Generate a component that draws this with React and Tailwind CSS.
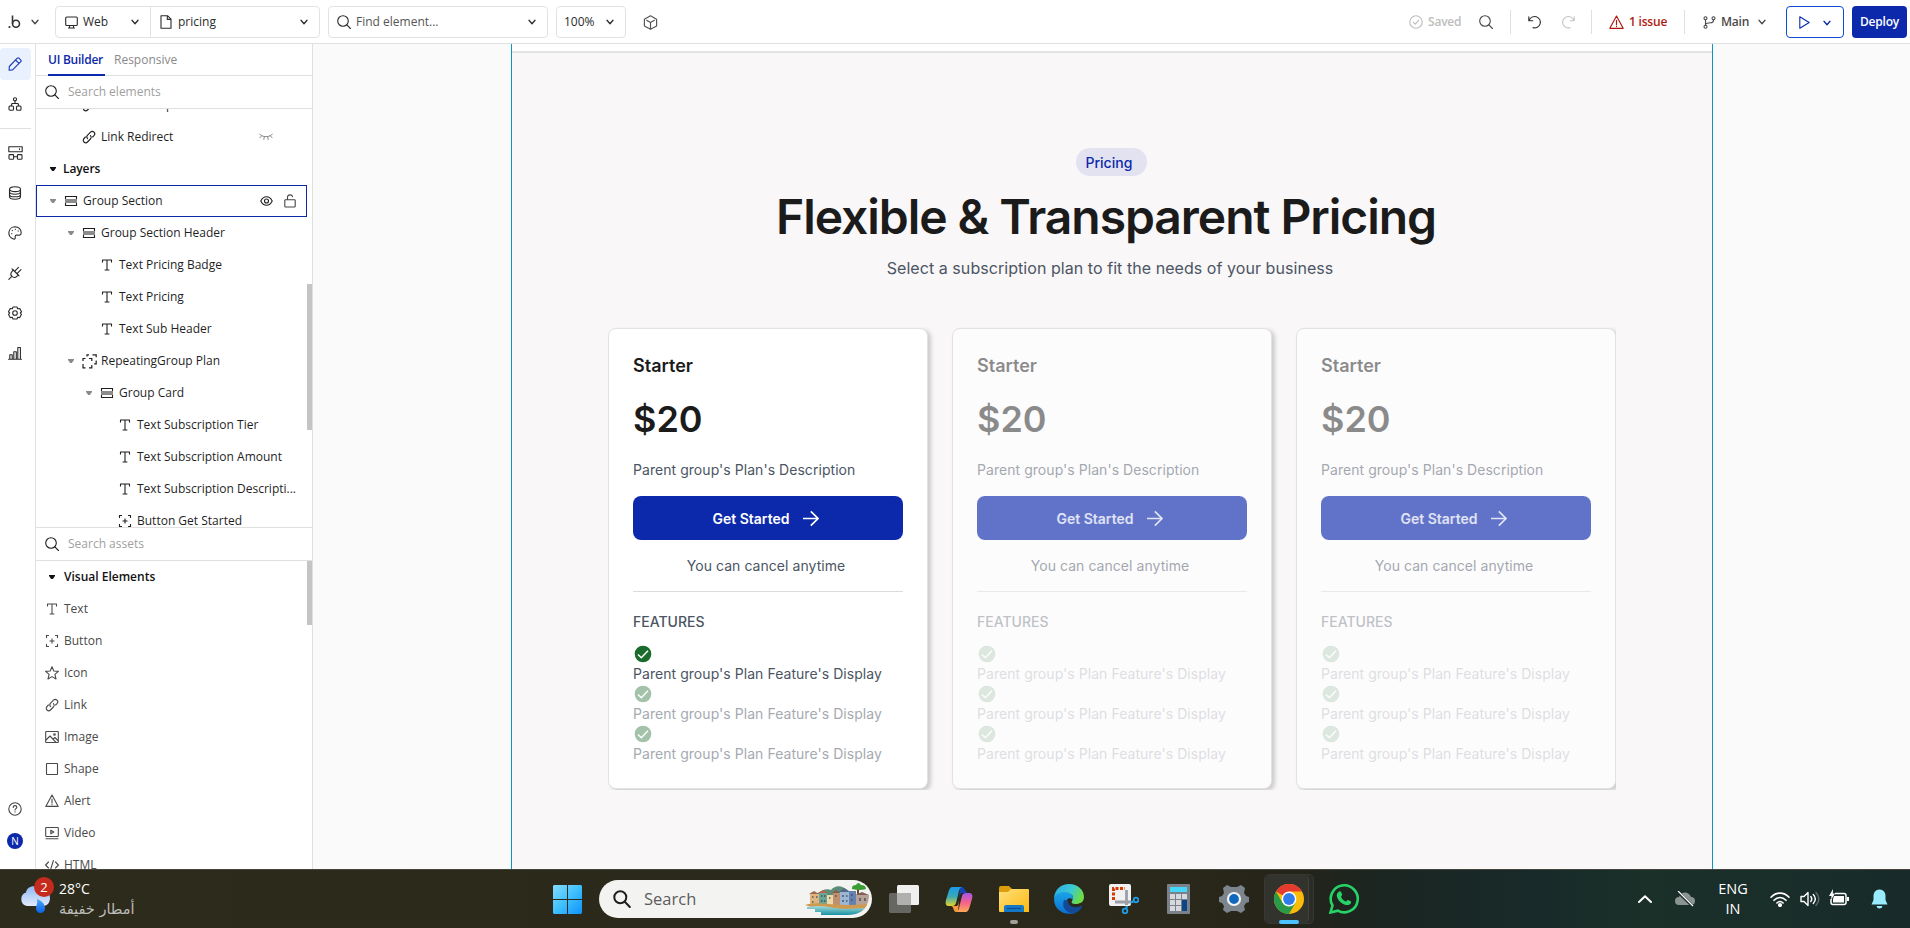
import React from "react";

function Svg({ vb = "0 0 16 16", className = "w-4 h-4", sw = 1.1, children }) {
  return (
    <svg viewBox={vb} className={"shrink-0 " + className} fill="none" stroke="currentColor" strokeWidth={sw} strokeLinecap="round" strokeLinejoin="round">
      {children}
    </svg>
  );
}

const Chevron = ({ className = "w-[8px] h-[8px]" }) => (
  <Svg vb="0 0 8 8" sw={1.3} className={className}><path d="M1 2.3 4 5.7 7 2.3" /></Svg>
);
const Magnifier = ({ className = "w-[14px] h-[14px]" }) => (
  <Svg vb="0 0 14 14" className={className}><circle cx="6" cy="6" r="5.3" /><path d="m9.9 9.9 3.5 3.6" /></Svg>
);
const Caret = ({ className }) => (
  <svg viewBox="0 0 6 4" className={"w-[6px] h-[4px] shrink-0 " + className} fill="currentColor"><path d="M0 0h6v1L3.800 4H2.200L0 1z" /></svg>
);
const LinkIcon = () => (
  <Svg vb="0 0 14 14" className="w-[14px] h-[14px]">
    <path d="M5.600 8.600c-1-1-1-2.500 0-3.500l2.900-3c1-1 2.500-1 3.500 0s1 2.500 0 3.500L10.600 7" />
    <path d="M8.400 5.600c1 1 1 2.400 0 3.400l-2.900 3c-1 1-2.500 1-3.500 0s-1-2.500 0-3.500L3.400 7" />
  </Svg>
);
const TextIcon = () => (
  <Svg vb="0 0 14 14" className="w-[14px] h-[14px]"><path d="M2.500 4V2h9v2M7 2v10M5.200 12h3.600" strokeLinecap="square" /></Svg>
);
const GroupIcon = () => (
  <svg viewBox="0 0 14 14" className="w-[14px] h-[14px] shrink-0" fill="none" stroke="currentColor" strokeWidth="1.100">
    <path d="M1.500 5V2.500h11V5M1.500 9v2.500h11V9" /><rect x="1" y="5" width="12" height="4" fill="#8b8b8b" stroke="none" />
  </svg>
);
const RepeatIcon = () => (
  <svg viewBox="0 0 15 15" className="w-[15px] h-[15px] shrink-0" fill="none" stroke="currentColor" strokeWidth="1.200">
    <path d="M1 7V4.500h2.500M7 4.500h2.800V7M1 10v3.800h2.500M7 13.800h2.800V11" /><path d="M5 2.500V.8h2M10.500.8h3.700v2.400M14.200 6.500v3.300h-2" />
  </svg>
);
const ButtonIcon = () => (
  <svg viewBox="0 0 14 14" className="w-[14px] h-[14px] shrink-0" fill="none" stroke="currentColor" strokeWidth="1.100">
    <path d="M1.500 4V1.500H4M10 1.500h2.500V4M12.500 10v2.500H10M4 12.500H1.500V10M7 4.500v5M4.500 7h5" />
  </svg>
);
const StarIcon = () => (
  <Svg vb="0 0 14 14" className="w-[14px] h-[14px]"><path d="m7 .7 1.800 4.300 4.600.4-3.500 3 1.100 4.600L7 10.600 3 13l1.100-4.600-3.500-3 4.600-.4z" /></Svg>
);
const ImageIcon = () => (
  <Svg vb="0 0 14 14" className="w-[14px] h-[14px]"><rect x=".7" y="1.500" width="12.600" height="11" rx=".5" /><path d="m1 10 4-4 6 6.300M8.300 9l1.600-1.500 3 3" /><circle cx="9.500" cy="4.500" r=".8" /></Svg>
);
const ShapeIcon = () => (
  <Svg vb="0 0 14 14" className="w-[14px] h-[14px]"><rect x="1.500" y="1.500" width="11" height="11" rx=".4" /></Svg>
);
const AlertIcon = ({ className = "w-[14px] h-[14px]" }) => (
  <Svg vb="0 0 14 14" className={className}><path d="M7 1 .8 12.400h12.400zM7 5v4M7 10.500v.3" /></Svg>
);
const VideoIcon = () => (
  <Svg vb="0 0 14 14" className="w-[14px] h-[14px]"><rect x=".7" y="1.500" width="12.600" height="9" rx=".4" /><path d="M5.800 4.300v3.400L8.800 6zM1 12.700h12" /></Svg>
);
const HtmlIcon = () => (
  <Svg vb="0 0 14 14" className="w-[14px] h-[14px]"><path d="M3.500 4 .6 7l2.900 3M10.500 4l2.900 3-2.900 3M8.400 2.500l-2.800 9" /></Svg>
);
const ClosedEye = () => (
  <Svg vb="0 0 14 8" className="w-[14px] h-[8px] text-[#8a8a8a]" sw={1}><path d="M.6 1C2.500 4.600 11.500 4.600 13.400 1M2.500 3 .9 4.800M5.300 4 4.800 6.500M8.700 4l.5 2.500M11.500 3l1.600 1.800" /></Svg>
);

/* ---------- Top bar ---------- */
function TopBar() {
  return (
    <header className="h-[44px] shrink-0 border-b border-[#e0e0e0] bg-white flex items-center text-[12px] text-[#2b2b2b] pt-[1px]">
      <div className="w-[55px] flex items-center pl-[8px] text-[#444]">
        <svg viewBox="0 0 13 14" className="w-[13px] h-[14px]" fill="none" stroke="#333" strokeWidth="1.600">
          <circle cx="8" cy="8.700" r="3.500" /><path d="M4.500.5v8.200" /><circle cx="1.500" cy="12" r="1.100" fill="#333" stroke="none" />
        </svg>
        <Chevron className="w-[8px] h-[8px] ml-[10px]" />
      </div>
      <div className="w-[265px] h-[32px] border border-[#e2e2e2] rounded-[4px] flex">
        <div className="w-[95px] border-r border-[#e2e2e2] flex items-center pl-[9px]">
          <Svg vb="0 0 13 13" className="w-[13px] h-[13px]"><rect x=".7" y="1" width="11.600" height="8.500" rx="1" /><path d="M3.500 12h6M4.500 9.800V12M8.500 9.800V12" /></Svg>
          <span className="ml-[5px] flex-1">Web</span>
          <Chevron className="w-[8px] h-[8px] mr-[11px]" />
        </div>
        <div className="flex-1 flex items-center pl-[9px]">
          <Svg vb="0 0 12 14" className="w-[12px] h-[14px]"><path d="M1 .7h6.500L11 4.200v9.100H1zM7.300.8v3.600H11" /></Svg>
          <span className="ml-[6px] flex-1">pricing</span>
          <Chevron className="w-[8px] h-[8px] mr-[11px]" />
        </div>
      </div>
      <div className="ml-[8px] w-[220px] h-[32px] border border-[#e2e2e2] rounded-[4px] flex items-center pl-[8px]">
        <Magnifier />
        <span className="ml-[5px] flex-1 text-[#555]">Find element...</span>
        <Chevron className="w-[8px] h-[8px] mr-[11px]" />
      </div>
      <div className="ml-[8px] w-[70px] h-[32px] border border-[#e2e2e2] rounded-[4px] flex items-center pl-[7px]">
        <span className="flex-1">100%</span>
        <Chevron className="w-[8px] h-[8px] mr-[11px]" />
      </div>
      <Svg vb="0 0 14 14" className="w-[15px] h-[15px] ml-[17px] text-[#555]"><path d="M7 .7 12.700 4v6.300L7 13.400l-5.700-3.100V4zM7 7v6.200M7 7 3.400 4.900M7 7l3.600-2.100" /></Svg>
      <div className="flex-1" />
      <div className="flex items-center text-[#bdbdbd]">
        <Svg vb="0 0 14 14" className="w-[14px] h-[14px]"><circle cx="7" cy="7" r="6.200" /><path d="m4.300 7.300 2 1.800 3.500-4" /></Svg>
        <span className="ml-[5px] w-[36px] whitespace-nowrap font-semibold tracking-[-0.2px]">Saved</span>
      </div>
      <Magnifier className="w-[14px] h-[14px] ml-[15px] text-[#444]" />
      <div className="ml-[17px] w-px h-[24px] bg-[#e0e0e0]" />
      <Svg vb="0 0 14 14" className="w-[14px] h-[14px] ml-[17px] text-[#333]"><path d="M.8 1.800v4h4M1.200 5.500A5.700 5.700 0 1 1 5 12.600" /></Svg>
      <Svg vb="0 0 14 14" className="w-[14px] h-[14px] ml-[19px] text-[#c4c4c4]"><path d="M13.200 1.800v4h-4M12.800 5.500A5.700 5.700 0 1 0 9 12.600" /></Svg>
      <div className="ml-[16px] w-px h-[24px] bg-[#e0e0e0]" />
      <div className="ml-[17px] flex items-center text-[#b01a0e]">
        <AlertIcon className="w-[15px] h-[15px]" />
        <span className="ml-[5px] w-[40px] whitespace-nowrap font-semibold tracking-[-0.2px]">1 issue</span>
      </div>
      <div className="ml-[15px] w-px h-[24px] bg-[#e0e0e0]" />
      <div className="ml-[18px] flex items-center text-[#4a4a4a]">
        <Svg vb="0 0 13 13" className="w-[13px] h-[13px]"><circle cx="2.500" cy="2.300" r="1.500" /><circle cx="10.500" cy="2.300" r="1.500" /><circle cx="2.500" cy="10.700" r="1.500" /><path d="M2.500 4v5M10.500 4c0 2.500-1 2.800-3 2.800-2.500 0-5 .2-5 2.200" /></Svg>
        <span className="ml-[5px] w-[30px] whitespace-nowrap font-semibold tracking-[-0.2px]">Main</span>
        <Chevron className="w-[8px] h-[8px] ml-[7px]" />
      </div>
      <div className="ml-[20px] w-[58px] h-[32px] border border-[#0d4bd0] rounded-[4px] flex items-center pl-[12px] text-[#0c29ab]">
        <Svg vb="0 0 11 13" className="w-[11px] h-[13px] mt-px"><path d="M.8.8v11.400l9.400-5.700z" /></Svg>
        <Chevron className="w-[8px] h-[8px] ml-[13px] mt-[2px]" />
      </div>
      <div className="ml-[8px] mr-[3px] w-[55px] h-[32px] rounded-[4px] bg-[#0c29ab] text-white font-semibold tracking-[-0.2px] flex items-center justify-center">Deploy</div>
    </header>
  );
}

/* ---------- Left icon rail ---------- */
function Rail() {
  const cell = "w-[30px] flex items-center justify-center text-[#2a2a2a] h-[40px]";
  return (
    <nav className="w-[36px] shrink-0 border-r border-[#e0e0e0] bg-white flex flex-col pt-[4px]">
      <div className="w-[31px] h-[32px] rounded-[4px] bg-[#e9f1fe] flex items-center justify-center pr-px text-[#1b36b4]">
        <Svg vb="0 0 14 14" className="w-[14px] h-[14px]"><path d="M9.300 1.200c.5-.5 1.100-.5 1.600 0l1.900 1.900c.5.500.5 1.100 0 1.600L4.600 12.900l-3.500.3.200-3.700zM7.600 3l3.400 3.400" /></Svg>
      </div>
      <div className={cell + " mt-[4px]"}>
        <Svg vb="0 0 14 14" className="w-[14px] h-[14px]"><circle cx="7" cy="2.300" r="1.600" /><rect x="1" y="9" width="4.500" height="4.200" rx="1" /><rect x="8.500" y="9" width="4.500" height="4.200" rx="1" /><path d="M7 4v2.500M3.200 8.800 4 6.500h6l.8 2.300" /></Svg>
      </div>
      <div className="w-[31px] h-px bg-[#e0e0e0] mt-[4px]" />
      <div className={cell + " mt-[4px]"}>
        <Svg vb="0 0 15 14" className="w-[15px] h-[14px]"><rect x=".8" y=".8" width="13.400" height="5" /><path d="M11.500 2.800v.6M5.500 10.800h4" /><rect x="1" y="8.600" width="4.600" height="4.600" rx=".8" /><rect x="9.400" y="8.600" width="4.600" height="4.600" rx=".8" /></Svg>
      </div>
      <div className={cell}>
        <Svg vb="0 0 14 14" className="w-[14px] h-[14px]"><ellipse cx="7" cy="3.200" rx="5.500" ry="2.400" /><path d="M1.500 3.200v7.600c0 3.200 11 3.200 11 0V3.200M1.500 5.800c0 3.200 11 3.200 11 0M1.500 8.400c0 3.200 11 3.200 11 0" /></Svg>
      </div>
      <div className={cell}>
        <Svg vb="0 0 14 14" className="w-[14px] h-[14px]"><path d="M7 .8a6.200 6.200 0 0 0-1.500 12.200c1.500.4 2-.5 1.700-1.700-.3-1.500.5-2.400 2-2.200 2 .4 4 .3 4-2.300C13.200 3.200 10.500.8 7 .8z" /><path d="M3.800 7.500v.3M4.300 4.300v.3M7.300 3.200v.3M10.200 4.800v.3" /></Svg>
      </div>
      <div className={cell}>
        <Svg vb="0 0 14 14" className="w-[14px] h-[14px]"><path d="m5.300 3.800 5 5-1.500 1.500c-1.500 1.500-3.500 1.500-4.700.2-1.500-1.300-1.500-3.300-.2-4.800zM4 2.800l7 7M3.800 10.300.8 13.300M7 4.800l3.500-3.500M9.500 7.200 13 3.700" /></Svg>
      </div>
      <div className={cell}>
        <Svg vb="0 0 14 14" className="w-[14px] h-[14px]"><circle cx="7" cy="7" r="2.300" /><path d="M5 1h4l.7 1.800 2.100-.3 1.700 3.300L12.300 7l1.200 1.300-1.700 3.300-2.100-.4L9 13H5l-.7-1.800-2.100.4L.5 8.300 1.700 7 .5 5.800l1.700-3.300 2.100.3z" /></Svg>
      </div>
      <div className={cell}>
        <Svg vb="0 0 14 14" className="w-[14px] h-[14px]"><path d="M.6 13.200h12.800M1.800 13V8.800h2.400V13M5.800 13V5.800h2.500V13M9.800 13V1.500h2.600V13" /></Svg>
      </div>
      <div className="flex-1" />
      <div className="w-[30px] h-[32px] flex items-center justify-center text-[#444]">
        <Svg vb="0 0 14 14" className="w-[14px] h-[14px]"><circle cx="7" cy="7" r="6.200" /><path d="M5.200 5.400C5.300 3 8.800 3.200 8.800 5.300c0 1.300-1.800 1.400-1.800 2.700M7 9.800v.3" /></Svg>
      </div>
      <div className="w-[30px] h-[32px] mb-[12px] flex items-center justify-center">
        <div className="w-[16px] h-[16px] rounded-full bg-[#0c29ab] text-white text-[10px] leading-none flex items-center justify-center">N</div>
      </div>
    </nav>
  );
}

/* ---------- Side panel ---------- */
const INDENT = ["pl-[12px]", "pl-[30px]", "pl-[48px]", "pl-[66px]"];
const TREE = [
  { l: 1, icon: LinkIcon, t: "Link Desktop", hidden: true },
  { l: 1, icon: LinkIcon, t: "Link Redirect", hidden: true },
  { header: true, t: "Layers" },
  { l: 0, icon: GroupIcon, t: "Group Section", open: true, selected: true },
  { l: 1, icon: GroupIcon, t: "Group Section Header", open: true },
  { l: 2, icon: TextIcon, t: "Text Pricing Badge" },
  { l: 2, icon: TextIcon, t: "Text Pricing" },
  { l: 2, icon: TextIcon, t: "Text Sub Header" },
  { l: 1, icon: RepeatIcon, t: "RepeatingGroup Plan", open: true },
  { l: 2, icon: GroupIcon, t: "Group Card", open: true },
  { l: 3, icon: TextIcon, t: "Text Subscription Tier" },
  { l: 3, icon: TextIcon, t: "Text Subscription Amount" },
  { l: 3, icon: TextIcon, t: "Text Subscription Descripti..." },
  { l: 3, icon: ButtonIcon, t: "Button Get Started" },
];
const ASSETS = [
  [TextIcon, "Text"], [ButtonIcon, "Button"], [StarIcon, "Icon"], [LinkIcon, "Link"], [ImageIcon, "Image"],
  [ShapeIcon, "Shape"], [AlertIcon, "Alert"], [VideoIcon, "Video"], [HtmlIcon, "HTML"],
];

function TreeRow({ row }) {
  if (row.header)
    return (
      <div className="h-[32px] flex items-center pl-[14px] font-semibold tracking-[-0.1px] text-[#111]">
        <Caret className="text-[#111]" /><span className="ml-[7px]">{row.t}</span>
      </div>
    );
  const Icon = row.icon;
  return (
    <div className={"h-[32px] w-[271px] flex items-center whitespace-nowrap " + (row.selected ? "outline outline-1 -outline-offset-1 outline-[#0c29ab] " : "") + INDENT[row.l]}>
      <span className="w-[10px] flex justify-center">{row.open && <Caret className="text-[#8a8a8a]" />}</span>
      <span className="w-[14px] ml-[6px] flex justify-center"><Icon /></span>
      <span className="ml-[5px] flex-1">{row.t}</span>
      {row.hidden && <span className="mr-[34px]"><ClosedEye /></span>}
      {row.selected && (
        <span className="flex items-center gap-[11px] mr-[11px]">
          <Svg vb="0 0 13 12" className="w-[13px] h-[12px]"><path d="M.8 6C3.400.3 9.600.3 12.200 6 9.600 11.700 3.400 11.700.8 6z" /><circle cx="6.500" cy="6" r="2" /></Svg>
          <Svg vb="0 0 12 14" className="w-[12px] h-[14px] text-[#444]"><rect x=".8" y="5.800" width="10.400" height="7.200" rx=".8" /><path d="M3.500 5.500V3.300c0-3 4.500-3.300 5-.6" /></Svg>
        </span>
      )}
    </div>
  );
}

function Panel() {
  return (
    <aside className="w-[277px] shrink-0 border-r border-[#e0e0e0] bg-white flex flex-col text-[12px] text-[#1f1f1f]">
      <div className="h-[32px] shrink-0 border-b border-[#e0e0e0] flex pl-[12px] gap-[9px] leading-[32px] whitespace-nowrap">
        <div className="h-[32px] w-[57px] border-b-2 border-[#0c29ab] text-[#0c29ab] font-semibold tracking-[-0.25px]">UI Builder</div>
        <div className="text-[#8a8a8a]">Responsive</div>
      </div>
      <div className="h-[33px] shrink-0 border-b border-[#e0e0e0] flex items-center pl-[9px]">
        <Magnifier /><span className="ml-[9px] text-[#a0a0a0]">Search elements</span>
      </div>
      <div className="h-[418px] shrink-0 overflow-hidden flex">
        <div className="w-[271px] -mt-[20px]">
          {TREE.map((r) => <TreeRow key={r.t} row={r} />)}
        </div>
        <div className="w-[5px] h-[146px] bg-[#c4c4c4] mt-[175px]" />
      </div>
      <div className="h-[34px] shrink-0 border-y border-[#e0e0e0] flex items-center pl-[9px]">
        <Magnifier /><span className="ml-[9px] text-[#a0a0a0]">Search assets</span>
      </div>
      <div className="flex-1 min-h-0 overflow-hidden flex">
        <div className="w-[271px]">
          <div className="h-[32px] flex items-center pl-[13px] font-semibold text-[#111]">
            <Caret className="text-[#111]" /><span className="ml-[9px]">Visual Elements</span>
          </div>
          {ASSETS.map(([Icon, t]) => (
            <div key={t} className="h-[32px] flex items-center pl-[9px] text-[#4a4a4a]"><Icon /><span className="ml-[5px]">{t}</span></div>
          ))}
        </div>
        <div className="w-[5px] h-[64px] bg-[#c4c4c4]" />
      </div>
    </aside>
  );
}

/* ---------- Canvas ---------- */
function Feature({ faded }) {
  return (
    <div className="h-[40px]">
      <svg viewBox="0 0 24 24" className={"block w-[20px] h-[20px] " + (faded ? "opacity-40" : "")}>
        <circle cx="12" cy="12" r="10" fill="#1a6c2d" /><path d="m6 12.500 4 4 8-8.500" fill="none" stroke="#fff" strokeWidth="1.800" />
      </svg>
      <div className={"text-[14px] leading-[20px] tracking-[0.050px] text-[#4b5563] whitespace-nowrap " + (faded ? "opacity-50" : "")}>Parent group's Plan Feature's Display</div>
    </div>
  );
}

function Card({ faded }) {
  const dim = faded ? " opacity-50" : "";
  return (
    <div className={"w-[320px] h-[461px] shrink-0 border border-[#e2e2e5] rounded-[8px] px-[24px] shadow-[3px_2px_4px_rgba(0,0,0,0.18)] " + (faded ? "bg-[#fdfcfd]" : "bg-white")}>
      <div className={"pt-[24px] text-[18px] leading-[26px] font-semibold text-[#1b1b1b]" + dim}>Starter</div>
      <div className={"mt-[16px] text-[36px] leading-[48px] font-semibold text-[#1b1b1b]" + dim}>$20</div>
      <div className={"mt-[17px] text-[14px] leading-[20px] tracking-[0.050px] text-[#4b5563] whitespace-nowrap" + dim}>Parent group's Plan's Description</div>
      <div className={"mt-[16px] h-[44px] rounded-[8px] pr-[5px] flex items-center justify-center text-[14px] font-semibold " + (faded ? "bg-[#6173c8] text-white/80" : "bg-[#0c29ab] text-white")}>
        Get Started
        <Svg vb="0 0 17 17" sw={1.700} className="w-[17px] h-[17px] ml-[12px]"><path d="M1 8.500h15M8.800 1.300 16 8.500l-7.200 7.200" strokeLinejoin="miter" strokeLinecap="butt" /></Svg>
      </div>
      <div className={"mt-[16px] text-[14px] leading-[20px] tracking-[0.050px] text-[#4b5563] text-center pr-[4px]" + dim}>You can cancel anytime</div>
      <div className={"mt-[15px] h-px bg-[#dcdcdc]" + (faded ? " opacity-60" : "")} />
      <div className={"mt-[19px] text-[14px] leading-[22px] font-medium text-[#4b5563]" + (faded ? " opacity-35" : "")}>FEATURES</div>
      <div className={"mt-[11px] " + (faded ? "opacity-35" : "")}>
        <Feature faded={faded} /><Feature faded /><Feature faded />
      </div>
    </div>
  );
}

function Canvas() {
  return (
    <main className="flex-1 min-w-0 bg-[#fafafa] flex font-['Inter',sans-serif]">
      <div className="ml-[198px] w-[1202px] border-x border-[#0b97c4] bg-[#f9f7f8] flex flex-col">
        <div className="h-[7px] bg-white shrink-0" />
        <div className="h-[2px] bg-[#e3e3e3] shrink-0" />
        <div className="flex flex-col items-center pt-[95px]">
          <div className="h-[28px] w-[71px] mr-[2px] rounded-full bg-[#e2e2f1] text-[#0c29ab] text-[14px] font-medium flex items-center pl-[10px]">Pricing</div>
          <div className="mt-[12px] pr-[12px] text-[48px] leading-[58px] tracking-[-1.050px] font-semibold text-[#1b1b1b] whitespace-nowrap">Flexible &amp; Transparent Pricing</div>
          <div className="mt-[10px] pr-[4px] text-[16px] leading-[24px] tracking-[0.055px] text-[#4b5563] whitespace-nowrap">Select a subscription plan to fit the needs of your business</div>
        </div>
        <div className="mt-[47px] pt-[1px] ml-[96px] w-[1008px] h-[463px] overflow-hidden flex gap-[24px]">
          <Card /><Card faded /><Card faded />
        </div>
      </div>
    </main>
  );
}

/* ---------- Taskbar ---------- */
function Taskbar() {
  const slot = "w-[55px] shrink-0 h-full flex items-center justify-center";
  return (
    <footer className="h-[59px] shrink-0 border-t border-[#44443c] bg-[linear-gradient(90deg,#2d2b1c_0%,#2a281a_62%,#262419_67%,#1b2521_72%,#182a29_80%,#1b3029_86%,#182b2a_100%)] flex items-center text-white overflow-hidden">
      <div className="w-[553px] shrink-0 h-full flex pl-[19px]">
        <svg viewBox="0 0 36 40" className="w-[36px] h-[40px] mt-[7px]">
          <defs>
            <linearGradient id="cl" x1="0" y1="0" x2="0" y2="1"><stop offset="0" stopColor="#8fb9f2" /><stop offset="1" stopColor="#e3eafc" /></linearGradient>
            <linearGradient id="dr" x1="0" y1="0" x2="0" y2="1"><stop offset="0" stopColor="#4aa7fb" /><stop offset="1" stopColor="#0a62e6" /></linearGradient>
          </defs>
          <path d="M8 29a7 7 0 0 1-1-13.500C8 8 19 7 21 14c6-2 10 2 10 7s-3 8-7 8z" fill="url(#cl)" />
          <path d="M18 22c5 2 8 5 8 9.500a4.500 4.500 0 0 1-9 0c0-3 2-5 1-9.500z" fill="url(#dr)" />
          <circle cx="25" cy="10" r="10" fill="#c42b1c" />
          <text x="25" y="15" fontSize="13" fill="#fff" textAnchor="middle" fontFamily="Open Sans, sans-serif">2</text>
        </svg>
        <div className="ml-[4px] mt-[9px]">
          <div className="text-[14px] leading-[20px]">28°C</div>
          <div className="text-[14.500px] leading-[20px] text-[#bdbdb8] font-['DejaVu_Sans',sans-serif] whitespace-nowrap" dir="rtl">أمطار خفيفة</div>
        </div>
      </div>
      <svg viewBox="0 0 29 29" className="w-[29px] h-[29px] shrink-0">
        <defs><linearGradient id="wn" x1="0" y1="0" x2="1" y2="1"><stop offset="0" stopColor="#84dcff" /><stop offset=".5" stopColor="#3fc0fd" /><stop offset="1" stopColor="#0f92fb" /></linearGradient></defs>
        <path d="M1 0h13v14H0V1zM15 0h13l1 1v13H15zM0 15h14v14H1l-1-1zM15 15h14v13l-1 1H15z" fill="url(#wn)" />
      </svg>
      <div className="ml-[17px] w-[273px] h-[38px] rounded-full bg-[#f3f3f2] shrink-0 flex items-center pl-[14px] overflow-hidden">
        <Svg vb="0 0 18 18" sw={2} className="w-[18px] h-[18px] text-[#1f1f1f]"><circle cx="7.300" cy="7.300" r="6" /><path d="m11.800 11.800 5 5.200" /></Svg>
        <span className="ml-[13px] text-[16.500px] text-[#5c5c5c] flex-1">Search</span>
        <svg viewBox="0 0 65 32" className="w-[65px] h-[32px] mr-[2px]">
          <defs>
            <linearGradient id="sea" x1="0" y1="0" x2="0" y2="1"><stop offset="0" stopColor="#a5dbd9" /><stop offset="1" stopColor="#1791a3" /></linearGradient>
            <clipPath id="shore"><path d="M0 0h62q3 6 2 14-2 18-22 18H0z" /></clipPath>
          </defs>
          <g clipPath="url(#shore)">
            <path d="M10 12q10-8 16-5Q33-1 44 8v8H10z" fill="#5d8d78" />
            <path d="M52 13V6h2v7z" fill="#6b4526" /><path d="M47 5q0-3 4-3 2-4 5 0 5 0 5 4-6 2-14 0z" fill="#3b9d35" />
            <rect x="5" y="11" width="9" height="11" fill="#dfb480" /><path d="M4 11 9 8l5 3z" fill="#9f6a4c" />
            <rect x="14" y="10" width="8" height="12" fill="#6aa595" /><path d="m13 10 5-3 5 3z" fill="#b8674e" />
            <rect x="22" y="12" width="6" height="10" fill="#eed8a8" /><rect x="28" y="10" width="7" height="12" fill="#bf9070" />
            <path d="m27 10 4-3 4 3z" fill="#865b48" /><rect x="35" y="9" width="9" height="13" fill="#9cb6d6" /><path d="m34 9 5-4 5 4z" fill="#566789" />
            <rect x="44" y="8" width="7" height="14" fill="#6680b0" /><rect x="51" y="12" width="13" height="12" fill="#b5a196" /><path d="m50 12 7-3 7 3z" fill="#81605a" />
            <path d="M7 13h1.500v2H7zM11 13h1.500v2H11zM16 12h1.500v2H16zM19 12h1.500v2H19zM24 14h1.500v2H24zM30 12h1.500v2H30zM37 12h2v2h-2zM41 12h1.500v2H41zM46 11h1.500v2H46zM54 15h2v3h-2zM59 15h2v3h-2zM7 18h1.500v2H7zM16 17h1.500v2H16zM19 17h1.500v2H19zM37 17h2v2h-2zM41 17h1.500v2H41zM46 16h1.500v2H46z" fill="#343b4a" opacity=".6" />
            <path d="M0 22q8-3 24-1t40 0q-1 7-8 8L12 26z" fill="#cf994f" />
            <path d="M2 24q12-2 22 0 12 3 36 1-5 7-14 7H16v-3h-6v-3H2z" fill="url(#sea)" />
          </g>
        </svg>
      </div>
      <svg viewBox="0 0 30 28" className="w-[30px] h-[28px] ml-[17px] shrink-0">
        <rect x="8" y="0" width="22" height="20" rx="1.500" fill="#f0f0f0" /><rect x="0" y="8" width="22" height="20" rx="1.500" fill="#666663" /><path d="M8 8h14v12H9.500Q8 20 8 18.500z" fill="#b0b0af" />
      </svg>
      <div className={slot + " ml-[12px]"}>
        <svg viewBox="0 0 28 25" className="w-[28px] h-[25px]">
          <defs>
            <linearGradient id="c1" x1="0" y1="0" x2="0" y2="1"><stop offset="0" stopColor="#199bea" /><stop offset=".5" stopColor="#38a9b5" /><stop offset="1" stopColor="#e6d32b" /></linearGradient>
            <linearGradient id="c2" x1="0" y1="0" x2="0" y2="1"><stop offset="0" stopColor="#a554ea" /><stop offset=".5" stopColor="#f4628c" /><stop offset="1" stopColor="#ffa956" /></linearGradient>
          </defs>
          <path d="M15 0h2c3 0 3 6 6 6h-5c-3 0-3 2-4 6z" fill="#1643b5" />
          <path d="M7 0h10c-3 1-3 4-4 8l-2 8c-1 3-3 3-5 3H4c-3 0-4-2-3-6L4 3c1-2 2-3 3-3z" fill="url(#c1)" />
          <path d="M21 25H11c3-1 3-4 4-8l2-8c1-3 3-3 5-3h2c3 0 4 2 3 6l-3 10c-1 2-2 3-3 3z" fill="url(#c2)" />
          <path d="M13 25h-2c-3 0-2-6-5-6h5c2 0 2-1 3-5z" fill="#f59a3a" />
        </svg>
      </div>
      <div className={slot + " relative"}>
        <svg viewBox="0 0 30 27" className="w-[30px] h-[27px]">
          <defs><linearGradient id="fo" x1="0" y1="0" x2="1" y2="1"><stop offset="0" stopColor="#ffe07a" /><stop offset="1" stopColor="#fcb913" /></linearGradient></defs>
          <path d="M0 2Q0 0 2 0h8l3 3v4H0z" fill="#dc9d0b" /><path d="M0 6h9l3-3h17q1 0 1 1v22H1q-1 0-1-1z" fill="url(#fo)" />
          <path d="M5 26v-5q0-2 2-2h16q2 0 2 2v5z" fill="#1478c8" /><path d="M8 22.500h14" stroke="#0b4f91" strokeWidth="1.200" />
        </svg>
        <span className="absolute bottom-[4px] w-[8px] h-[4px] rounded-full bg-[#a09f99]" />
      </div>
      <div className={slot}>
        <svg viewBox="0 0 30 30" className="w-[30px] h-[30px]">
          <defs>
            <linearGradient id="e1" x1="0" y1="0" x2="1" y2=".4"><stop offset="0" stopColor="#2aa9e8" /><stop offset=".6" stopColor="#3cc9d2" /><stop offset="1" stopColor="#6bdc4c" /></linearGradient>
            <linearGradient id="e2" x1="0" y1="0" x2="0" y2="1"><stop offset="0" stopColor="#1ba4e6" /><stop offset="1" stopColor="#0b6ed2" /></linearGradient>
          </defs>
          <path d="M0 14C1 5 7 0 15 0c9 0 15 6 15 13 0 5-4 7-8 7-4 0-5-1-4-3 3-4 0-8-6-8-6 0-10 3-12 5z" fill="url(#e1)" />
          <path d="M0 15C1 10 6 8 11 8c6 0 9 4 8 8-2-3-7-2-7 3 0 6 5 9 9 10-9 3-21-2-21-14z" fill="url(#e2)" />
          <path d="M10 16c-3 8 3 13 9 13.500 4-.5 7-3 9-6.500.5-1-.3-1.300-1-1-5 2.500-13 1-13-5z" fill="#124a97" />
        </svg>
      </div>
      <div className={slot}>
        <svg viewBox="0 0 30 30" className="w-[30px] h-[30px]">
          <rect width="22" height="22" rx="2" fill="#f1f1f1" />
          <path d="M4.500 16V4.500H16" stroke="#d83b01" strokeWidth="3" strokeDasharray="3 1.500" fill="none" />
          <path d="M6 18h16M17.500 6v15" stroke="#9aa0a6" strokeWidth="2.800" /><circle cx="27" cy="16" r="2.300" fill="none" stroke="#1e9de9" strokeWidth="1.800" /><circle cx="16" cy="27" r="2.300" fill="none" stroke="#1e9de9" strokeWidth="1.800" /><path d="M22 18.500 25 17M18 22l-1 3" stroke="#1e9de9" strokeWidth="2.200" />
        </svg>
      </div>
      <div className={slot}>
        <svg viewBox="0 0 23 30" className="w-[23px] h-[30px]">
          <rect width="23" height="30" rx="1" fill="#7b8188" /><rect x="3" y="3" width="17" height="5" fill="#44d7f9" />
          <path d="M3 10h5v5H3zM9 10h5v5H9zM15 10h5v5h-5zM3 16h5v5H3zM9 16h5v5H9zM3 22h5v5H3zM9 22h5v5H9z" fill="#d5d9de" /><rect x="15" y="16" width="5" height="11" fill="#0d4585" />
        </svg>
      </div>
      <div className={slot}>
        <svg viewBox="0 0 30 30" className="w-[30px] h-[30px]">
          <path d="m8 1 4 2h6l4-2 4 3-1 5 2 3 3 1v5l-3 1-2 3 1 4-4 3-4-2h-6l-4 2-4-3 1-4-2-3-3-1v-5l3-1 2-3-1-5z" fill="#7c858d" />
          <circle cx="15" cy="15" r="6" fill="#0f68bd" stroke="#f3f3f3" strokeWidth="2.200" />
        </svg>
      </div>
      <div className="w-[50px] ml-[3px] h-[50px] shrink-0 rounded-[5px] bg-[#2b2c26] border border-[#373832]">
        <div className="w-[44px] h-[48px] rounded-[5px] bg-[#32332d] border-r border-[#42433d] flex items-center justify-center relative">
          <svg viewBox="0 0 30 30" className="w-[30px] h-[30px] ml-[4px]">
            <circle cx="15" cy="15" r="15" fill="#fbbc09" />
            <path d="M15 15 2 7.500A15 15 0 0 1 28 7.500H15z" fill="#e43b2e" />
            <path d="M2 7.500A15 15 0 0 0 15 30l6.500-11.300L8.500 18.700z" fill="#2a9a48" />
            <circle cx="15" cy="15" r="7.400" fill="#fff" /><circle cx="15" cy="15" r="5.900" fill="#2f7de9" />
          </svg>
          <span className="absolute bottom-[-1px] left-[14px] w-[20px] h-[4px] rounded-full bg-[#4cc2ff]" />
        </div>
      </div>
      <svg viewBox="0 0 30 30" className="w-[30px] h-[30px] ml-[15px] shrink-0">
        <path d="M1.500 28.500 3.500 21.500A13.500 13.500 0 1 1 8.800 26.700z" fill="none" stroke="#25d366" strokeWidth="2.600" />
        <path d="M9.500 8c1-1 2.200-1 2.700.2l1 2.300c.3.700-1.300 2-1.100 2.500.8 2 2.600 3.600 4.700 4.500.6.200 1.600-1.800 2.300-1.500l2.500 1.200c1 .5.500 2-.3 2.800-1.500 1.500-4 1.300-6 .5-3.500-1.500-6-4-7.200-7.300C7.300 11 8 9.300 9.500 8z" fill="#25d366" />
      </svg>
      <div className="flex-1" />
      <Svg vb="0 0 14 8" sw={2} className="w-[14px] h-[8px] mr-[23px]"><path d="M1 7 7 1.200 13 7" /></Svg>
      <svg viewBox="0 0 20 16" className="w-[20px] h-[16px] mr-[20px] shrink-0"><path d="M4 14a4 4 0 0 1 0-8c2-6 10-6 12 0a4 4 0 0 1 0 8z" fill="#8b9391" /><path d="m3 1 15 14.500" stroke="#182a29" strokeWidth="3" /><path d="m3 0 15 15" stroke="#fff" strokeWidth="1.300" /></svg>
      <div className="w-[36px] mr-[19px] text-center text-[14.500px] leading-[20px]">ENG<br />IN</div>
      <Svg vb="0 0 20 16" sw={1.600} className="w-[20px] h-[16px] mr-[10px]"><path d="M1 6.200c5-5.500 13-5.500 18 0M4 9.300c3.500-3.800 8.500-3.800 12 0M6.900 12c2-2 4.200-2 6.200 0" /><circle cx="10" cy="14" r="1.300" fill="#fff" /></Svg>
      <Svg vb="0 0 20 16" sw={1.400} className="w-[20px] h-[16px] mr-[9px]"><path d="M1 5.500h3l4-4v13l-4-4H1zM10.800 5.500c1.200 1.500 1.200 3.500 0 5M13.300 3.500c2.500 2.800 2.500 6.200 0 9" /><path d="M16 1.500c3.500 4 3.500 9 0 13" stroke="#5f6b68" /></Svg>
      <svg viewBox="0 0 20 17" className="w-[20px] h-[17px] mr-[22px] mb-[3px] shrink-0"><path d="M6 4.500h9q2 0 2 2v7q0 2-2 2H4q-2 0-2-2V10" fill="none" stroke="#fff" strokeWidth="1.500" /><path d="M5 7h10v6.500H4V10z" fill="#fff" /><path d="M18 8h2v4h-2z" fill="#fff" /><path d="M4 0 0 7h2.500L2 11l4-6.500H3.800z" fill="#fff" /></svg>
      <svg viewBox="0 0 17 20" className="w-[17px] h-[20px] mr-[22px] shrink-0"><path d="M8.500.5c4 0 6 3 6 6.500v4l2 4.500H.5l2-4.500V7c0-3.500 2-6.500 6-6.500zM5.500 17h6q-.5 2.500-3 2.500t-3-2.500z" fill="#98ecfe" /></svg>
    </footer>
  );
}

export default function App() {
  return (
    <div className="w-[1910px] h-[928px] overflow-hidden flex flex-col bg-white font-['Open_Sans',sans-serif]">
      <TopBar />
      <div className="flex-1 min-h-0 flex overflow-hidden">
        <Rail />
        <Panel />
        <Canvas />
      </div>
      <Taskbar />
    </div>
  );
}
